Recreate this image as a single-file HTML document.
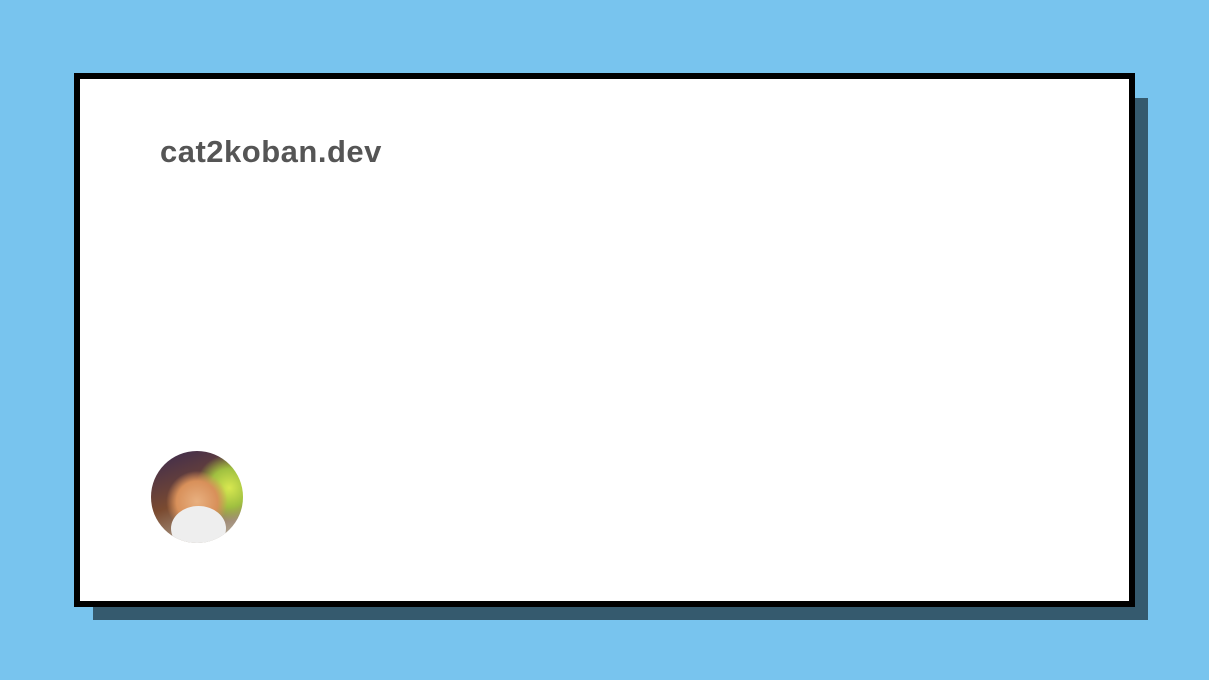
<!DOCTYPE html>
<html><head><style>
html,body{margin:0;padding:0;width:1209px;height:680px;background:#78c4ee;overflow:hidden}
.sh{position:absolute;left:93px;top:98px;width:1055px;height:522px;background:#355a6e}
.box{position:absolute;left:74px;top:73px;width:1049px;height:522px;background:#fff;border:6px solid #000}
.t{position:absolute;left:160px;top:134px;font:bold 31px "Liberation Sans",sans-serif;color:#555;letter-spacing:0.5px}
.av{position:absolute;left:151px;top:451px;width:92px;height:92px;border-radius:50%;overflow:hidden;
background:radial-gradient(circle at 50% 55%,#e8b080 0,#d8905a 30%,transparent 45%),
radial-gradient(circle at 85% 40%,#d8e850 0,#a0c040 20%,transparent 35%),
linear-gradient(160deg,#3a2a50,#7a4a30 50%,#c0c0b0 100%)}
.av:after{content:"";position:absolute;left:20px;top:55px;width:55px;height:45px;border-radius:50%;background:#eee}
</style></head><body>
<div class="sh"></div>
<div class="box"></div>
<div class="t">cat2koban.dev</div>
<div class="av"></div>
</body></html>
